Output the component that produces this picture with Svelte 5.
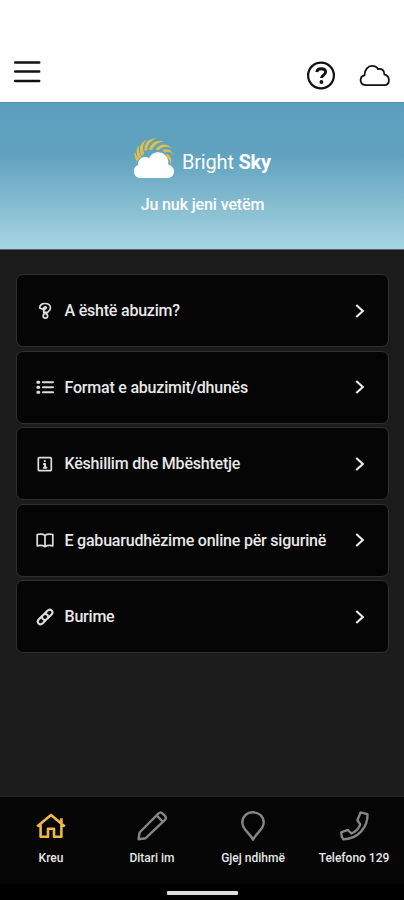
<script>
  let items = $state([
    { icon: "question", label: "A është abuzim?" },
    { icon: "list", label: "Format e abuzimit/dhunës" },
    { icon: "info", label: "Këshillim dhe Mbështetje" },
    { icon: "book", label: "E gabuarudhëzime online për sigurinë" },
    { icon: "link", label: "Burime" },
  ]);

  let tabs = $state([
    { icon: "home", label: "Kreu" },
    { icon: "pencil", label: "Ditari im" },
    { icon: "pin", label: "Gjej ndihmë" },
    { icon: "phone", label: "Telefono 129" },
  ]);

  let activeTab = $state("home");
</script>

<div class="screen">
  <header class="topbar">
    <button class="iconButton menu" aria-label="Menu">
      <svg width="28" height="24" viewBox="0 0 28 24">
        <path d="M2.2 2.4h24M2.2 11.6h24M2.2 20.9h24" stroke="#111" stroke-width="2.5" stroke-linecap="round" />
      </svg>
    </button>
    <div class="actions">
      <button class="iconButton" aria-label="Help">
        <svg width="30" height="30" viewBox="0 0 30 30" fill="none" stroke="#111">
          <circle cx="15" cy="15.5" r="12.9" stroke-width="2.2" />
          <path d="M10.7 12C11.2 9.7 12.9 8.8 15.2 8.8c2.6 0 4.4 1.2 4.4 3.2 0 3.2-4 3-4.1 6" stroke-width="2.9" />
          <circle cx="15.4" cy="22" r="1.9" fill="#111" stroke="none" />
        </svg>
      </button>
      <button class="iconButton" aria-label="Cloud">
        <svg width="32" height="24" viewBox="0 0 32 24" fill="none" stroke="#111" stroke-width="1.8" stroke-linejoin="round">
          <path d="M6.5 22.2C3.7 21.8 1.6 19.8 1.6 17.3c0-2.7 1.5-4.5 3.9-4.9C5.4 7 9 2.9 13 2.9c2.9 0 4.8 1 6.1 3.3 3.6-1 6.6 1.6 6.2 5.1 2.9.8 4.6 3 4.6 5.6 0 3-1.8 5.2-4.5 5.3z" />
        </svg>
      </button>
    </div>
  </header>

  <section class="hero">
    <div class="brand">
      <svg width="42" height="42" viewBox="0 0 42 42">
        <g fill="#e5bf45">
          <path d="M2 14.5Q.2 19 4 24.5L6.2 22Q2.4 18.5 2 14.5z" />
          <path d="M6.2 8.2Q.8 14 6 21.5L8.6 19.5Q4.5 14 6.2 8.2z" />
          <path d="M14 2.5Q4 7 8.3 18.5L11.2 17Q7.5 8.5 14 2.5z" />
          <path d="M23.4 1.3Q11.2 1.7 11.4 13.5L14.2 13.5Q14 5 23.4 1.3z" />
          <path d="M32 4.6Q20 1 15.8 12.5L18.5 13.2Q22.5 4.8 32 4.6z" />
          <path d="M38.8 11.2Q30 3.2 22.6 12.2L25.4 13.4Q31 7.2 38.8 11.2z" />
          <path d="M41 19Q37.5 9.8 29.8 13.2L31.3 16Q37 12.6 41 19z" />
          <path d="M37.5 28Q40.5 19.5 33 16.6L33.5 20.5Q37.5 22.5 37.5 28z" />
        </g>
        <path d="M7.5 41C3.8 41 .9 38.1.9 34.4c0-3.3 1.8-5.5 4.3-6.3-.5-4.6 2.6-8.1 6.8-8.1 1.8 0 3 .3 4.2 1.2C17.7 17.5 21 15.2 25 15.2c5.8 0 10.2 4.4 10.3 10.1 0 .7-.1 1.4-.2 2.1 3.4.8 5.9 3.5 5.9 7 0 3.7-2.9 6.6-6.7 6.6z" fill="#fff" />
      </svg>
      <h1>Bright <b>Sky</b></h1>
    </div>
    <p>Ju nuk jeni vetëm</p>
  </section>

  <main class="list">
    {#each items as item}
      <button class="card">
        <svg width="20" height="20" viewBox="0 0 20 20" fill="none" stroke="#ddd" stroke-width="1.7" stroke-linecap="round" stroke-linejoin="round">
          {#if item.icon === "question"}
            <path d="M4.7 7C4.7 4 7 2.5 10.1 2.5s5.4 1.8 5.4 4.5c0 2.5-1.9 3.3-3 4.4H8.6c-.2-2.4.8-3.2 2.2-3.9.9-.5.7-1.5-.4-1.6C9.2 5.8 8.6 7 7.7 8.3z" />
            <circle cx="10.4" cy="14.9" r="2.2" />
          {:else if item.icon === "list"}
            <path d="M8 5.2h10M8 10.2h10M8 15.2h10" stroke-width="2" />
            <path d="M2.8 5.2h1M2.8 10.2h1M2.8 15.2h1" stroke-width="3" />
          {:else if item.icon === "info"}
            <rect x="3.3" y="3.7" width="13" height="13" rx="1" />
            <path d="M9.8 7.1v.2M8.9 10h1.2v3.6M8.8 13.7h2.6" stroke-width="2" />
          {:else if item.icon === "book"}
            <path d="M10 5.4C8 3.8 5.4 3.8 2.2 4.5v11.3c3-.7 5.6-.6 7.8.9 2.2-1.5 4.8-1.6 7.8-.9V4.5c-3.1-.7-5.7-.7-7.8.9zM10 5.4v11" />
          {:else}
            <path d="M9 7.2 12.2 4c3.4-3.2 7.1.7 4.1 3.8l-4 4c-2.4 2.2-5.3.9-5.2-1.7M11.2 12.7 8 16c-3.4 3.2-7.1-.7-4.1-3.8l4-4c2.4-2.2 5.3-.9 5.2 1.7" stroke-width="2.1" />
          {/if}
        </svg>
        <span class="label">{item.label}</span>
        <svg width="12" height="18" viewBox="0 0 12 18">
          <path d="m2.3 3 6.5 6-6.5 6" fill="none" stroke="#eee" stroke-width="2.1" />
        </svg>
      </button>
    {/each}
  </main>

  <nav class="tabs">
    {#each tabs as tab}
      <button class="tab" class:active={activeTab === tab.icon} onclick={() => (activeTab = tab.icon)}>
        <svg width="32" height="32" viewBox="0 0 32 32" fill="none" stroke="currentColor" stroke-width="2.4" stroke-linejoin="round">
          {#if tab.icon === "home"}
            <path d="M2.2 16.6 16 4.9l13.8 11.7M26.4 13.4V8.2M5.6 14.3v12.5h7.4v-8h6v8h7.4V14.3" stroke-width="2.6" />
          {:else if tab.icon === "pencil"}
            <path d="M2.5 29.2 3.6 22.5 22.3 3.7c1.5-1.5 2.9-1.5 4.4 0l2 2c1.5 1.5 1.5 2.9 0 4.4L9.7 28.2zM20.6 5.4l6.4 6.4" />
          {:else if tab.icon === "pin"}
            <path d="M16 29.7C12.7 22.8 5.3 19.7 5.3 12.5 5.3 6.4 10 2.3 16 2.3s10.7 4.1 10.7 10.2c0 7.2-7.4 10.3-10.7 17.2z" />
          {:else}
            <path d="m22.6 2.4 6.9 1.7c.4 13.2-9.7 25.1-24.3 25.1-1.4-1.6-2-4.2-2-6.9l6.6-2.4 3.6 3.6c3.9-1.7 7.4-5 8.9-9.1l-2.9-4.2z" />
          {/if}
        </svg>
        <span>{tab.label}</span>
      </button>
    {/each}
  </nav>
  <div class="gesture"><i></i></div>
</div>

<style>
  :global(body) {
    margin: 0;
  }
  .screen {
    width: 404px;
    height: 900px;
    display: flex;
    flex-direction: column;
    overflow: hidden;
    background: #1b1b1b;
    font-family: Roboto, "Liberation Sans", sans-serif;
  }
  button {
    border: 0;
    padding: 0;
    background: none;
    font-family: inherit;
  }
  svg {
    display: block;
    flex-shrink: 0;
  }
  .topbar {
    box-sizing: border-box;
    height: 102px;
    padding: 60px 13px 0;
    display: flex;
    justify-content: space-between;
    align-items: flex-start;
    background: #fff;
  }
  .actions {
    display: flex;
    align-items: center;
    gap: 23px;
  }
  .hero {
    box-sizing: border-box;
    height: 148px;
    padding-top: 34px;
    border-top: 1px solid #4f91ad;
    border-bottom: 1px solid #4d666d;
    background: linear-gradient(#5b9fbf 0%, #60a2bf 35%, #83bbd0 68%, #a7d5e3 100%);
    color: #fff;
    text-align: center;
  }
  .brand {
    display: flex;
    justify-content: center;
    align-items: center;
    gap: 7px;
    height: 41px;
  }
  h1 {
    margin: 8px 0 0;
    font-size: 20px;
    line-height: 24px;
    font-weight: 400;
    letter-spacing: -0.2px;
  }
  h1 b {
    font-weight: 700;
  }
  .hero p {
    margin: 17px 0 0 1px;
    font-size: 16px;
    line-height: 20px;
    font-weight: 500;
    letter-spacing: -0.12px;
  }
  .list {
    flex: 1;
    padding: 24px 15px 0 16px;
    display: flex;
    flex-direction: column;
    gap: 3.5px;
  }
  .card {
    box-sizing: border-box;
    height: 73px;
    padding: 0 22px 0 18px;
    display: flex;
    align-items: center;
    border: 1.5px solid #303030;
    border-radius: 7px;
    background: #050505;
    color: #e8e8e8;
  }
  .label {
    flex: 1;
    margin-left: 9.5px;
    text-align: left;
    white-space: nowrap;
    font-size: 16px;
    font-weight: 500;
    letter-spacing: -0.21px;
  }
  .tabs {
    box-sizing: border-box;
    height: 88px;
    padding-top: 13px;
    display: flex;
    border-top: 1px solid #242424;
    background: #050505;
  }
  .tab {
    flex: 1;
    display: flex;
    flex-direction: column;
    align-items: center;
    color: #858585;
  }
  .tab.active {
    color: #efb842;
  }
  .tab span {
    margin-top: 8px;
    padding-left: 1px;
    color: #e8e8e8;
    font-size: 12px;
    line-height: 16px;
    font-weight: 500;
    white-space: nowrap;
  }
  .gesture {
    height: 16px;
    display: flex;
    justify-content: center;
    align-items: center;
    background: #000;
  }
  .gesture i {
    width: 71px;
    height: 4px;
    margin-top: 2px;
    border-radius: 1px;
    background: #ddd;
  }
</style>
